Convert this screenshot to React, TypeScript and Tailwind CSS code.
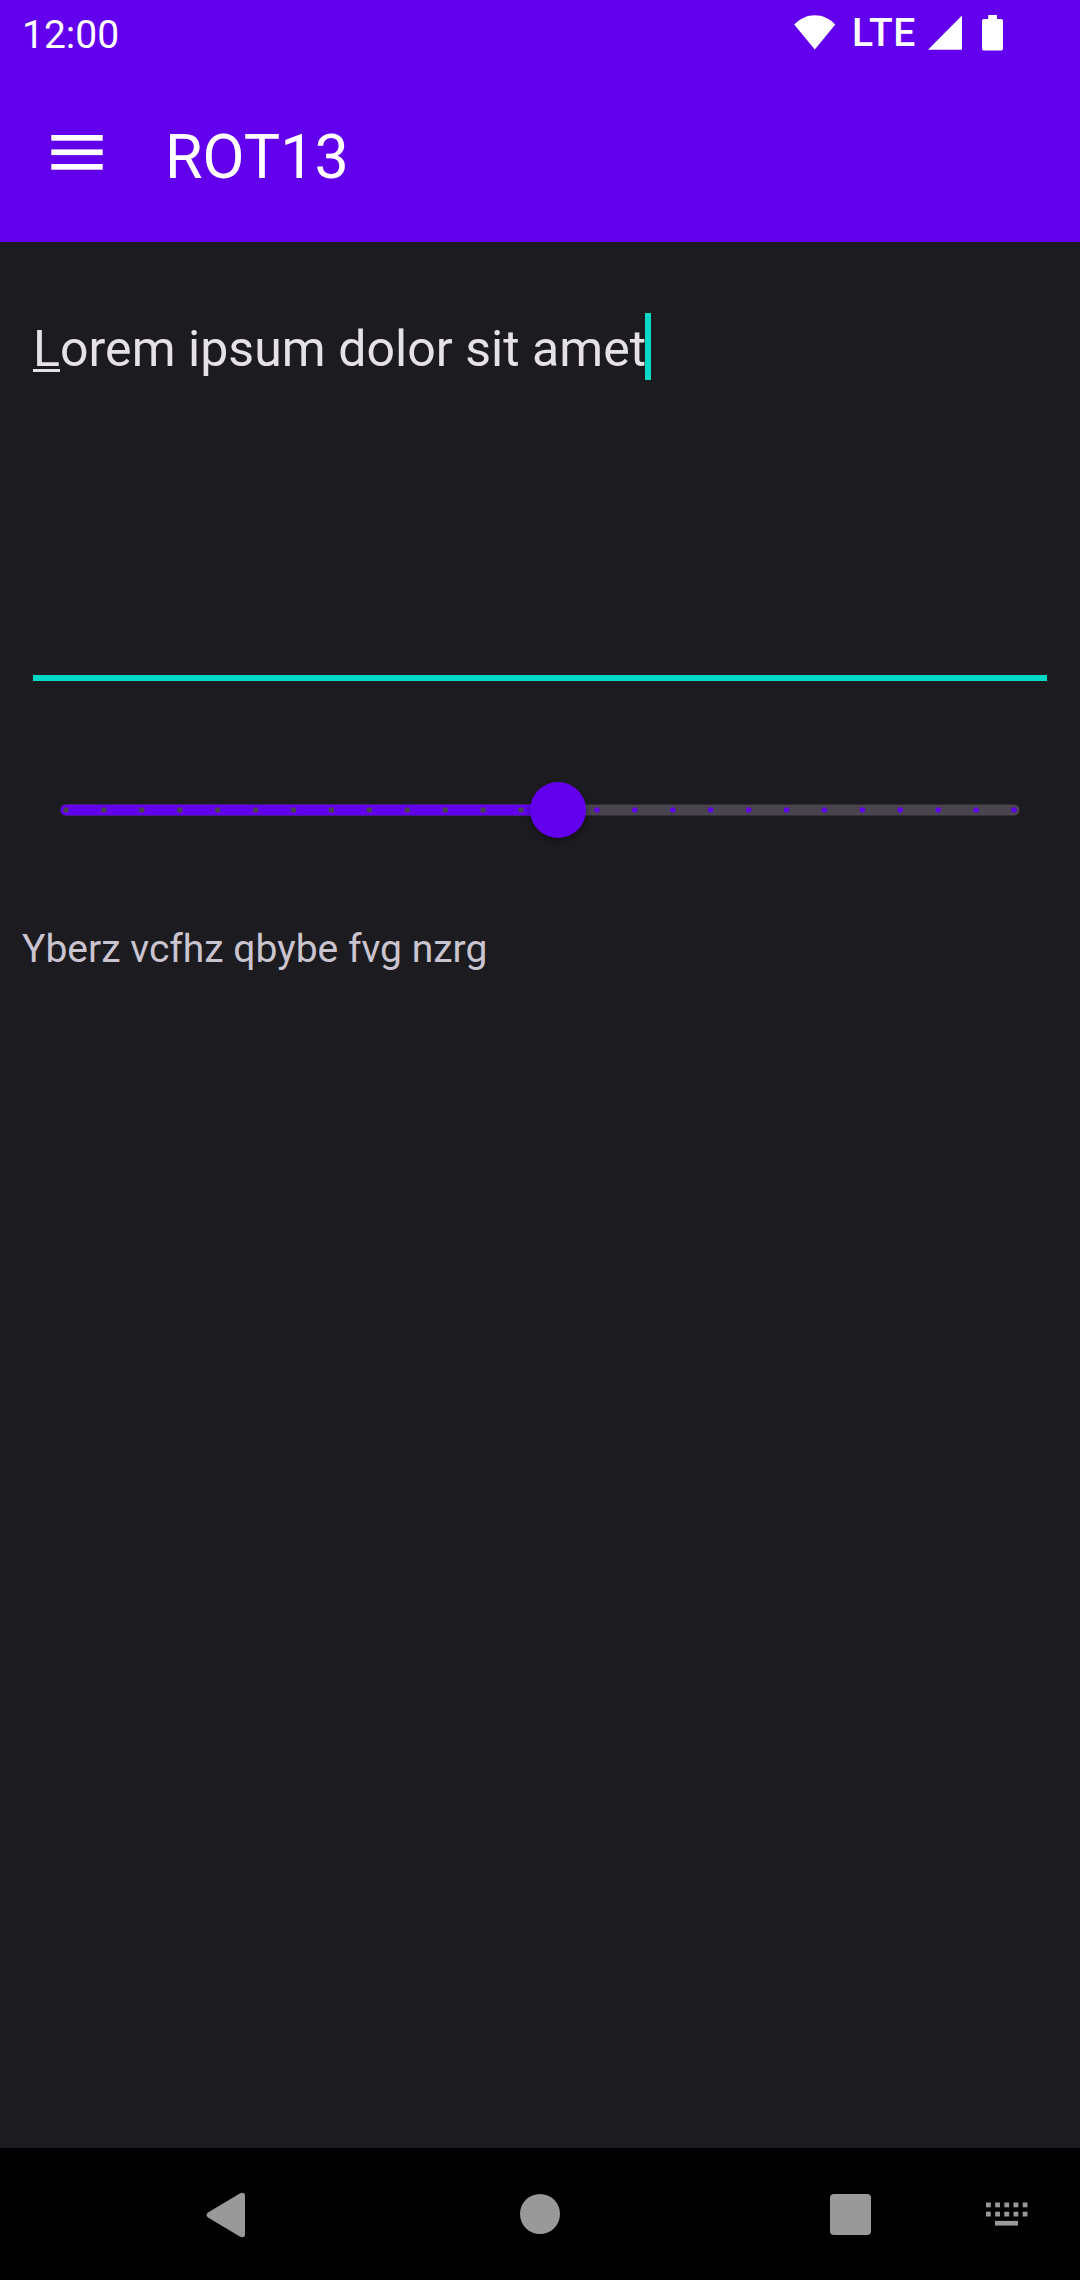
const TICKS = Array.from({ length: 26 }, (_, i) => i);

function StatusBar() {
  return (
    <div className="flex h-[66px] items-start justify-between pl-[22px] pr-[76px] text-[39px] leading-[46px]">
      <span className="pt-3">12:00</span>
      <div className="flex items-start">
        <svg className="mt-[15px] h-[35px] w-[42px]" viewBox="0 0 42 35" fill="currentColor">
          <path d="M0.2 9.6C6 3.5 13.2 0.2 20.8 0.2C28.4 0.2 35.6 3.5 41.3 9.6L20.8 34.6Z" />
        </svg>
        <span className="ml-4 mt-[10px] w-[69px] font-medium tracking-[0.6px]">LTE</span>
        <svg className="ml-[7px] mt-[15px] h-[35px] w-[35px]" viewBox="0 0 35 35" fill="currentColor">
          <path d="M34 0.4V34.7H0Z" />
        </svg>
        <svg className="ml-[19px] mt-[15px] h-9 w-[22px]" viewBox="0 0 22 36" fill="currentColor">
          <path d="M6.2 0H15V4H19.2Q21 4 21 5.8V33.8Q21 35.6 19.2 35.6H1.8Q0 35.6 0 33.8V5.8Q0 4 1.8 4H6.2Z" />
        </svg>
      </div>
    </div>
  );
}

function Toolbar() {
  return (
    <div className="flex h-[176px] items-start pl-[51px]">
      <button aria-label="Menu" className="mt-[69px]">
        <svg className="block h-[35px] w-[52px]" viewBox="0 0 52 35" fill="currentColor">
          <rect x="0.3" y="0" width="51.4" height="5.7" />
          <rect x="0.3" y="14.4" width="51.4" height="5.7" />
          <rect x="0.3" y="29" width="51.4" height="5.7" />
        </svg>
      </button>
      <h1 className="ml-[62px] mt-[55px] text-[61px] leading-[72px]">ROT13</h1>
    </div>
  );
}

function TextField() {
  return (
    <div className="mx-[33px] mt-[71px] flex h-[368px] items-start border-b-[6px] border-[#03dac5] text-[#e6e1e5]">
      <p className="mt-[7px] w-[612px] whitespace-nowrap text-[50px] leading-[58px] tracking-[0.05px]">
        <span className="underline decoration-[2.6px] underline-offset-[3px]">L</span>orem ipsum dolor sit amet
      </p>
      <span className="h-[67px] w-[6px] bg-[#03dac5]" />
    </div>
  );
}

function Slider() {
  return (
    <svg className="mt-[63px] block h-[132px] w-[1080px]" viewBox="0 744 1080 132">
      <defs>
        <filter id="thumbShadow" x="-30%" y="-30%" width="160%" height="160%">
          <feDropShadow dx="0" dy="3" stdDeviation="3" floodColor="#000" floodOpacity="0.45" />
        </filter>
      </defs>
      <rect x="60.5" y="804.5" width="959" height="11" rx="5.5" fill="#49454f" />
      <path d="M558 804.5H66a5.5 5.5 0 0 0 0 11H558Z" fill="#6200ee" />
      {TICKS.map((i) => (
        <circle key={i} cx={66 + i * 37.92} cy="810" r="2.75" fill={i <= 13 ? "#49454f" : "#6200ee"} />
      ))}
      <circle cx="558" cy="810" r="28" fill="#6200ee" filter="url(#thumbShadow)" />
    </svg>
  );
}

function NavigationBar() {
  return (
    <nav className="flex h-[132px] items-center bg-black pl-[206px] text-[#999999]">
      <svg className="mt-px h-[46px] w-10" viewBox="0 0 40 46" fill="currentColor">
        <path d="M2 20.5L34.2 1.2Q39 -0.5 39 4V42Q39 46.5 34.2 44.8L2 25.5Q-1 23 2 20.5Z" />
      </svg>
      <span className="ml-[274px] h-10 w-10 rounded-full bg-[#999999]" />
      <span className="ml-[270px] mt-px h-[41px] w-[41px] rounded-[4px] bg-[#999999]" />
      <svg className="ml-[115px] h-6 w-[43px]" viewBox="0 0 43 24" fill="currentColor">
        {[0, 1, 2, 3, 4].map((i) => (
          <g key={i}>
            <rect x={i * 9.17} y="0.5" width="4.8" height="4.8" />
            <rect x={i * 9.17} y="9.7" width="4.8" height="4.8" />
          </g>
        ))}
        <rect x="9" y="18.9" width="23" height="4.7" />
      </svg>
    </nav>
  );
}

export default function App() {
  return (
    <div className="flex h-[2280px] w-[1080px] flex-col overflow-hidden bg-[#1c1b1f] font-[Roboto,sans-serif]">
      <header className="bg-[#6200ee] text-white">
        <StatusBar />
        <Toolbar />
      </header>
      <main className="flex-1">
        <TextField />
        <Slider />
        <p className="ml-[22px] mt-[50px] text-[39px] leading-[46px] text-[#cac4d0]">Yberz vcfhz qbybe fvg nzrg</p>
      </main>
      <NavigationBar />
    </div>
  );
}
